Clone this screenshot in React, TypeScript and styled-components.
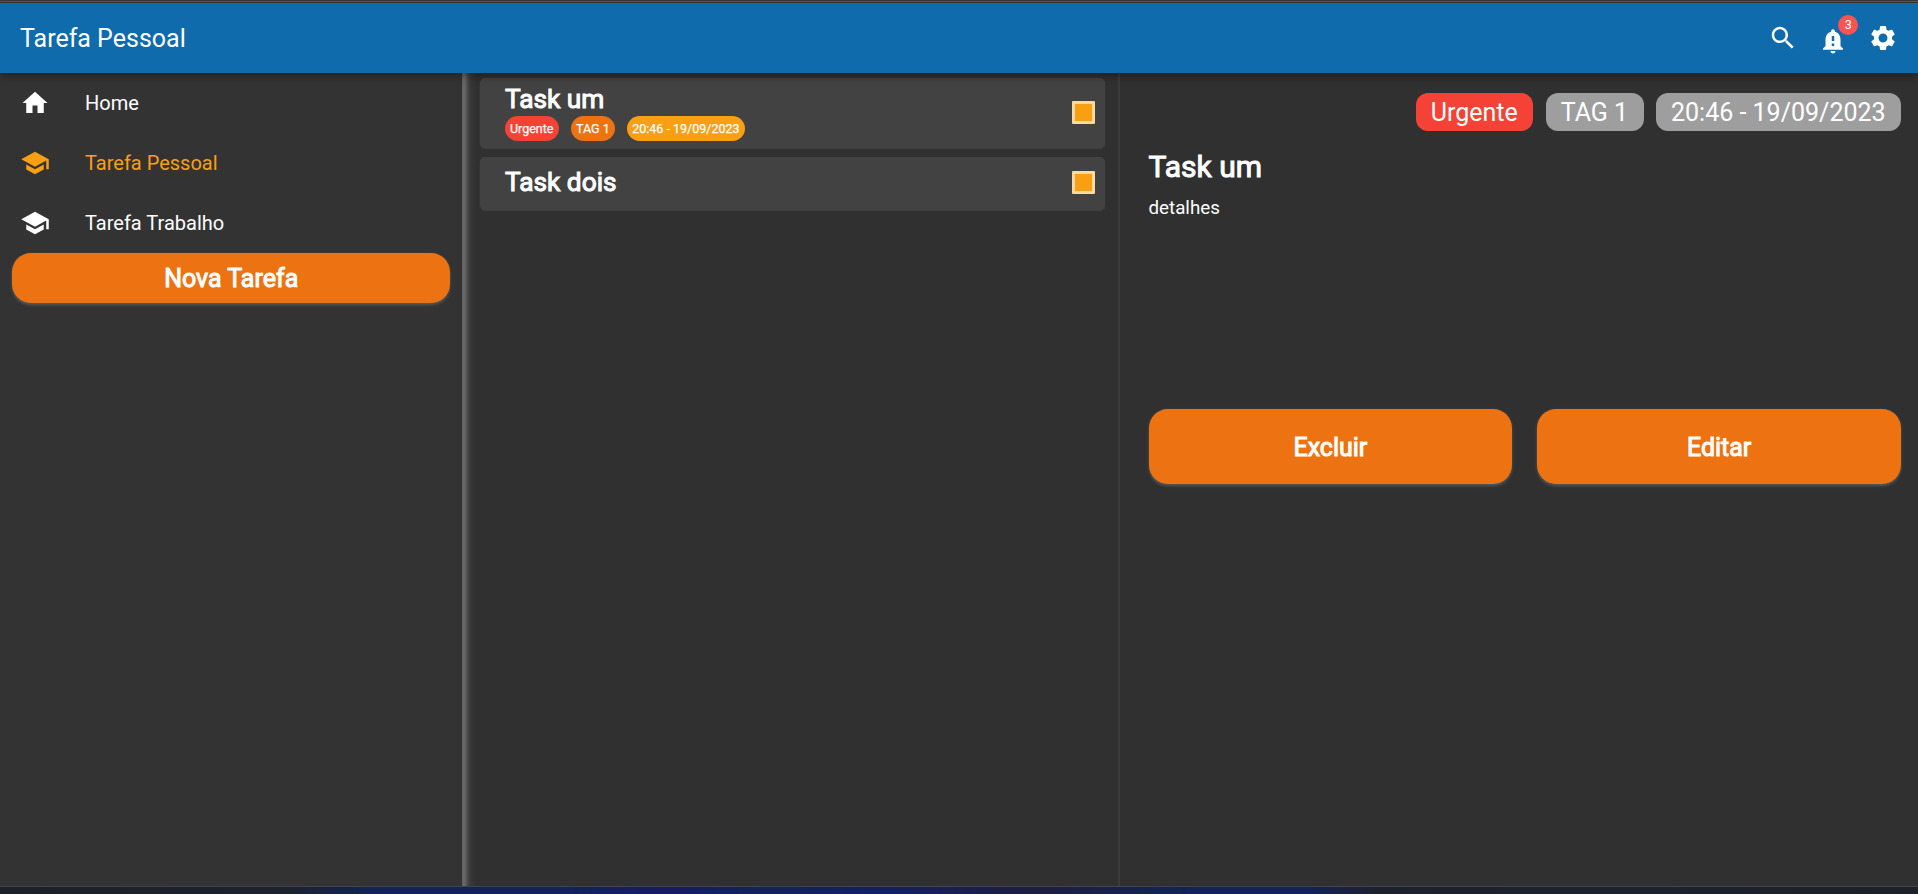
import React from "react";
import styled, { createGlobalStyle, css } from "styled-components";

const GlobalStyle = createGlobalStyle`
  * { box-sizing: border-box; }
  html, body { margin: 0; padding: 0; background: #303030; }
  body { font-family: Roboto, "Liberation Sans", sans-serif; color: #fff; overflow: hidden; }
`;

const heavy = css`
  font-weight: 400;
  -webkit-text-stroke: 1px currentColor;
`;

const Page = styled.div`
  width: 1918px;
  height: 894px;
  display: flex;
  flex-direction: column;
  background: #303030;
`;

const TopEdge = styled.div`
  flex: none;
  height: 3px;
  background: linear-gradient(#37383c 0 1px, #5b595d 1px 2px, #3a3437 2px 3px);
`;

const AppBar = styled.header`
  flex: none;
  height: 70px;
  display: flex;
  align-items: center;
  justify-content: space-between;
  padding: 0 19.8px 0 20px;
  background: #0f6bac;
  position: relative;
  z-index: 3;
  box-shadow: 0 3px 8px rgba(0, 0, 0, 0.35);
`;

const AppTitle = styled.h1`
  margin: 0;
  padding-top: 2px;
  font-size: 25px;
  font-weight: 400;
  line-height: 30px;
`;

const Actions = styled.div`
  display: flex;
  gap: 20px;
  align-items: center;
`;

const IconButton = styled.button<{ $drop?: number }>`
  display: block;
  position: relative;
  width: 30px;
  height: 30px;
  padding: 0;
  border: 0;
  background: none;
  color: #fff;
  margin-top: ${(p) => p.$drop ?? 0}px;
`;

const Badge = styled.span`
  position: absolute;
  left: 20px;
  top: -11px;
  width: 20px;
  height: 20px;
  border-radius: 50%;
  background: #ff5252;
  font: 400 12.5px/20px Roboto, sans-serif;
  text-align: center;
`;

const Body = styled.div`
  flex: 1;
  min-height: 0;
  display: flex;
`;

const Sidebar = styled.nav`
  width: 462px;
  flex: none;
  background: #333;
`;

const NavItem = styled.a<{ $active?: boolean }>`
  display: flex;
  align-items: center;
  gap: 35px;
  height: 60px;
  padding-left: 20px;
  font-size: 20px;
  color: ${(p) => (p.$active ? "#f99f13" : "#fff")};
`;

const Button = styled.button<{ $height: number }>`
  ${heavy}
  flex: 1;
  height: ${(p) => p.$height}px;
  padding: 2px 0 0;
  border: 0;
  border-radius: 19px;
  background: #ed7211;
  color: #fff;
  font-family: inherit;
  font-size: 25px;
  line-height: 30px;
  box-shadow: 0 1.5px 3px rgba(120, 130, 140, 0.5);
`;

const SidebarAction = styled.div`
  display: flex;
  padding: 0 12px 0 12.4px;
`;

const TaskList = styled.main`
  width: 658px;
  flex: none;
  border-right: 2px solid #3b3b3b;
  padding: 5px 13.5px 0 18px;
  display: flex;
  flex-direction: column;
  gap: 9px;
  background: linear-gradient(90deg, #585858 0, #686868 1px, #646464 3px, #505050 5px, #3e3e3e 7px, #353535 10px, #303030 14px);
`;

const TaskCard = styled.article<{ $height: number }>`
  height: ${(p) => p.$height}px;
  display: flex;
  align-items: center;
  justify-content: space-between;
  padding: 0 9.2px 2px 25px;
  border-radius: 5px;
  background: #424242;
  box-shadow: 0 1px 2px rgba(75, 75, 75, 0.6);
`;

const TaskTitle = styled.h2`
  ${heavy}
  margin: 0;
  font-size: 26.25px;
  line-height: 31px;
`;

const Pills = styled.div`
  display: flex;
  gap: 12.5px;
  margin-top: 1px;
`;

const Pill = styled.span<{ $color: string }>`
  height: 25px;
  padding: 0 5px;
  border-radius: 12.5px;
  background: ${(p) => p.$color};
  font-size: 12.5px;
  line-height: 26px;
  -webkit-text-stroke: 0.25px currentColor;
`;

const Check = styled.span`
  width: 23px;
  height: 23px;
  border: 3px solid #fcd9a1;
  border-radius: 1px;
  background: #f99f13;
`;

const Detail = styled.section`
  flex: 1;
  padding: 20px 17px 0 28.5px;
`;

const Tags = styled.div`
  display: flex;
  justify-content: flex-end;
  gap: 12.5px;
`;

const Tag = styled.span<{ $color: string }>`
  height: 38px;
  padding: 0 15.4px 0 15px;
  border-radius: 12px;
  background: ${(p) => p.$color};
  font-size: 25px;
  line-height: 39px;
`;

const DetailTitle = styled.h2`
  ${heavy}
  margin: 18px 0 0;
  font-size: 30px;
  line-height: 36px;
`;

const DetailText = styled.p`
  margin: 12px 0 0;
  height: 212px;
  font-size: 18.75px;
  line-height: 22px;
`;

const DetailActions = styled.div`
  display: flex;
  gap: 25px;
`;

const BottomEdge = styled.footer`
  flex: none;
  height: 8px;
  border-top: 1px solid #42434d;
  background: linear-gradient(90deg, #1e202b 0, #1b232e 15%, #12235a 20%, #12235a 29%, #161b62 35%, #12235a 40%, #131f62 46%, #1c1f40 54%, #12235a 63%, #12235a 68%, #1e202e 72%, #1b232e 85%, #1e202b 100%);
`;

const paths = {
  search:
    "M15.5 14h-.79l-.28-.27C15.41 12.59 16 11.11 16 9.5 16 5.91 13.09 3 9.5 3S3 5.91 3 9.5 5.91 16 9.5 16c1.61 0 3.09-.59 4.23-1.57l.27.28v.79l5 4.99L20.49 19l-4.99-5zm-6 0C7.01 14 5 11.99 5 9.5S7.01 5 9.5 5 14 7.01 14 9.5 11.99 14 9.5 14z",
  alert:
    "M18 16v-5c0-3.07-1.64-5.64-4.5-6.32V4c0-.83-.67-1.5-1.5-1.5s-1.5.67-1.5 1.5v.68C7.63 5.36 6 7.92 6 11v5l-2 2v1h16v-1l-2-2zm-5 0h-2v-2h2v2zm0-4h-2V8h2v4zm-1 10c1.1 0 2-.9 2-2h-4c0 1.1.89 2 2 2z",
  settings:
    "M19.14 12.94c.04-.3.06-.61.06-.94 0-.32-.02-.64-.07-.94l2.03-1.58c.18-.14.23-.41.12-.61l-1.92-3.32c-.12-.22-.37-.29-.59-.22l-2.39.96c-.5-.38-1.03-.7-1.62-.94l-.36-2.54c-.04-.24-.24-.41-.48-.41h-3.84c-.24 0-.43.17-.47.41l-.36 2.54c-.59.24-1.13.57-1.62.94l-2.39-.96c-.22-.08-.47 0-.59.22L2.74 8.87c-.12.21-.08.47.12.61l2.03 1.58c-.05.3-.09.63-.09.94s.02.64.07.94l-2.03 1.58c-.18.14-.23.41-.12.61l1.92 3.32c.12.22.37.29.59.22l2.39-.96c.5.38 1.03.7 1.62.94l.36 2.54c.05.24.24.41.48.41h3.84c.24 0 .44-.17.47-.41l.36-2.54c.59-.24 1.13-.56 1.62-.94l2.39.96c.22.08.47 0 .59-.22l1.92-3.32c.12-.22.07-.47-.12-.61l-2.01-1.58zM12 15.6c-1.98 0-3.6-1.62-3.6-3.6s1.62-3.6 3.6-3.6 3.6 1.62 3.6 3.6-1.62 3.6-3.6 3.6z",
  home: "M10 20v-6h4v6h5v-8h3L12 3 2 12h3v8z",
  school:
    "M5 13.18v4L12 21l7-3.82v-4L12 17l-7-3.82zM12 3L1 9l11 6 9-4.91V17h2V9L12 3z",
};

const Icon = ({ name }: { name: keyof typeof paths }) => (
  <svg width="30" height="30" viewBox="0 0 24 24" fill="currentColor" display="block">
    <path d={paths[name]} />
  </svg>
);

export default function App() {
  return (
    <Page>
      <GlobalStyle />
      <TopEdge />
      <AppBar>
        <AppTitle>Tarefa Pessoal</AppTitle>
        <Actions>
          <IconButton aria-label="Buscar">
            <Icon name="search" />
          </IconButton>
          <IconButton aria-label="Alertas" $drop={6}>
            <Icon name="alert" />
            <Badge>3</Badge>
          </IconButton>
          <IconButton aria-label="Ajustes">
            <Icon name="settings" />
          </IconButton>
        </Actions>
      </AppBar>
      <Body>
        <Sidebar>
          <NavItem>
            <Icon name="home" />
            Home
          </NavItem>
          <NavItem $active>
            <Icon name="school" />
            Tarefa Pessoal
          </NavItem>
          <NavItem>
            <Icon name="school" />
            Tarefa Trabalho
          </NavItem>
          <SidebarAction>
            <Button $height={50}>Nova Tarefa</Button>
          </SidebarAction>
        </Sidebar>
        <TaskList>
          <TaskCard $height={70}>
            <div>
              <TaskTitle>Task um</TaskTitle>
              <Pills>
                <Pill $color="#f44336">Urgente</Pill>
                <Pill $color="#ed7211">TAG 1</Pill>
                <Pill $color="#f99f13">20:46 - 19/09/2023</Pill>
              </Pills>
            </div>
            <Check />
          </TaskCard>
          <TaskCard $height={53}>
            <TaskTitle>Task dois</TaskTitle>
            <Check />
          </TaskCard>
        </TaskList>
        <Detail>
          <Tags>
            <Tag $color="#f44336">Urgente</Tag>
            <Tag $color="#9e9e9e">TAG 1</Tag>
            <Tag $color="#9e9e9e">20:46 - 19/09/2023</Tag>
          </Tags>
          <DetailTitle>Task um</DetailTitle>
          <DetailText>detalhes</DetailText>
          <DetailActions>
            <Button $height={75}>Excluir</Button>
            <Button $height={75}>Editar</Button>
          </DetailActions>
        </Detail>
      </Body>
      <BottomEdge />
    </Page>
  );
}
